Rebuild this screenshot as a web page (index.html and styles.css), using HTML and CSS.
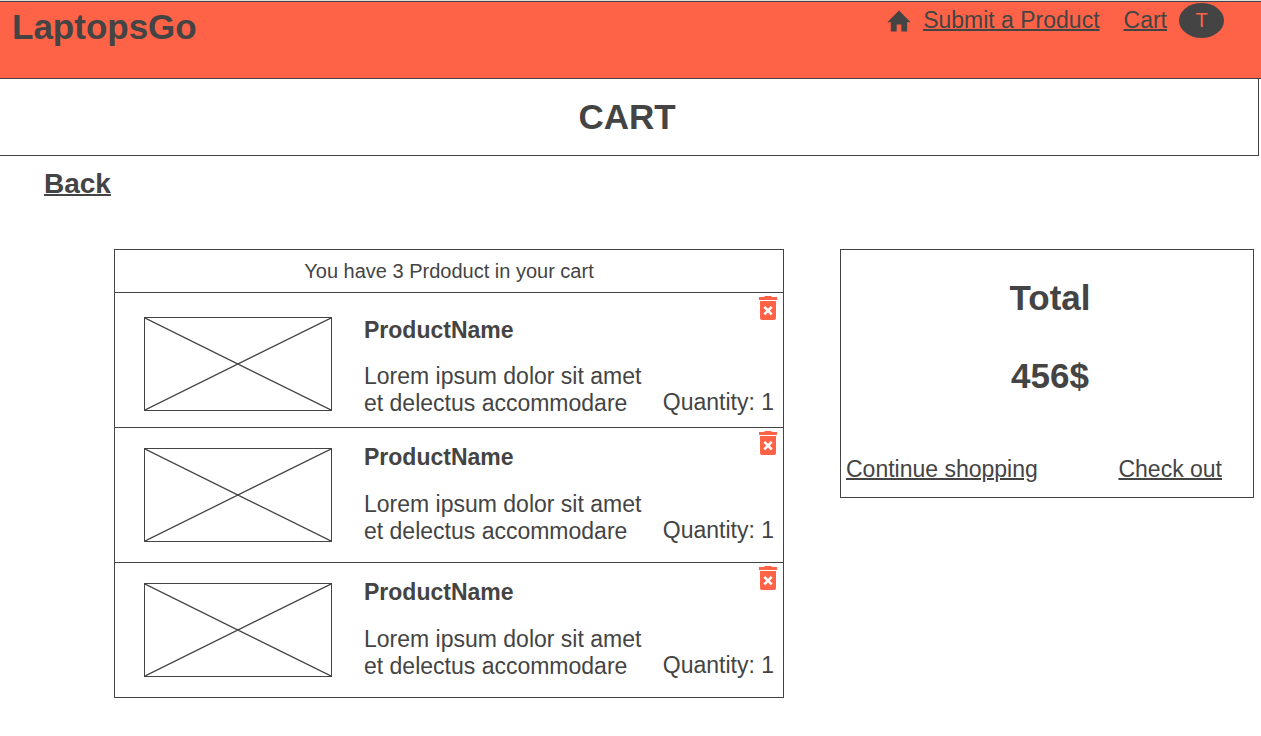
FILE: index.html
```html
<!DOCTYPE html>
<html lang="en">
<head>
  <meta charset="utf-8">
  <meta name="viewport" content="width=device-width, initial-scale=1">
  <title>LaptopsGo - Cart</title>
  <link rel="stylesheet" href="styles.css">
</head>
<body>
  <svg class="sprite" aria-hidden="true">
    <symbol id="icon-trash" viewBox="0 0 18 24">
      <path fill="currentColor" d="M5 1 6 0h6l1 1h5v3H0V1zM1 5h16v17a2 2 0 0 1-2 2H3a2 2 0 0 1-2-2z"/>
      <path fill="none" stroke="#fff" stroke-width="2.600" d="M5.300 10.900l7.400 7.400M12.700 10.900l-7.400 7.400"/>
    </symbol>
    <symbol id="placeholder" viewBox="0 0 186 92" preserveAspectRatio="none">
      <path fill="none" stroke="currentColor" stroke-width="1.300" d="M0 0l186 92M186 0L0 92"/>
    </symbol>
  </svg>

  <header class="site-header">
    <a class="brand" href="#">LaptopsGo</a>
    <nav class="nav">
      <a class="nav-home" href="#" aria-label="Home">
        <svg class="home-icon" viewBox="0 0 24 24" aria-hidden="true"><path fill="currentColor" d="M10 21v-6h4v6h5v-8h3L12 3 2 13h3v8z"/></svg>
      </a>
      <a class="link nav-submit" href="#">Submit a Product</a>
      <a class="link nav-cart" href="#">Cart</a>
      <button class="avatar" type="button">T</button>
    </nav>
  </header>

  <div class="page-title"><h1 class="heading">CART</h1></div>
  <a class="link back" href="#">Back</a>

  <main class="cart">
    <section class="products">
      <p class="products-count">You have 3 Prdoduct in your cart</p>
      <article class="item item-first">
        <svg class="item-image" aria-hidden="true"><use href="#placeholder"/></svg>
        <div class="item-body">
          <h2 class="item-name">ProductName</h2>
          <p class="item-text">Lorem ipsum dolor sit amet<br>et delectus accommodare</p>
        </div>
        <div class="item-side">
          <button class="remove" type="button" aria-label="Remove product"><svg class="trash-icon" aria-hidden="true"><use href="#icon-trash"/></svg></button>
          <p class="quantity">Quantity: 1</p>
        </div>
      </article>
      <article class="item">
        <svg class="item-image" aria-hidden="true"><use href="#placeholder"/></svg>
        <div class="item-body">
          <h2 class="item-name">ProductName</h2>
          <p class="item-text">Lorem ipsum dolor sit amet<br>et delectus accommodare</p>
        </div>
        <div class="item-side">
          <button class="remove" type="button" aria-label="Remove product"><svg class="trash-icon" aria-hidden="true"><use href="#icon-trash"/></svg></button>
          <p class="quantity">Quantity: 1</p>
        </div>
      </article>
      <article class="item">
        <svg class="item-image" aria-hidden="true"><use href="#placeholder"/></svg>
        <div class="item-body">
          <h2 class="item-name">ProductName</h2>
          <p class="item-text">Lorem ipsum dolor sit amet<br>et delectus accommodare</p>
        </div>
        <div class="item-side">
          <button class="remove" type="button" aria-label="Remove product"><svg class="trash-icon" aria-hidden="true"><use href="#icon-trash"/></svg></button>
          <p class="quantity">Quantity: 1</p>
        </div>
      </article>
    </section>

    <aside class="summary">
      <h2 class="heading">Total</h2>
      <p class="heading">456$</p>
      <div class="summary-links">
        <a class="link" href="#">Continue shopping</a>
        <a class="link" href="#">Check out</a>
      </div>
    </aside>
  </main>
</body>
</html>
```
FILE: styles.css
```css
:root {
  --ink: #444;
  --accent: #ff6347;
}

* {
  box-sizing: border-box;
}

body,
h1,
h2,
p {
  margin: 0;
}

body {
  background: #fff;
  color: var(--ink);
  font: 23px/27px "Liberation Sans", Arial, sans-serif;
  border-top: 1px solid #ddd;
}

button {
  padding: 0;
  border: 0;
  font: inherit;
  cursor: pointer;
}

.sprite {
  display: none;
}

.link {
  color: inherit;
  text-decoration: underline;
  text-decoration-thickness: 2px;
}

.heading,
.brand {
  font-size: 35px;
  line-height: 40px;
  font-weight: bold;
}

.site-header {
  display: flex;
  justify-content: space-between;
  align-items: flex-start;
  min-height: 78px;
  padding: 1px 37px 0 12px;
  background: var(--accent);
  border-top: 1px solid var(--ink);
  border-bottom: 1px solid var(--ink);
}

.brand {
  padding-top: 4px;
  color: inherit;
  text-decoration: none;
}

.nav {
  display: flex;
  align-items: center;
}

.nav-home {
  display: flex;
  margin-right: 10px;
  color: inherit;
}

.home-icon {
  width: 28px;
  height: 28px;
}

.nav-submit {
  margin-right: 24px;
}

.nav-cart {
  margin-right: 12px;
}

.avatar {
  width: 45px;
  height: 35px;
  border-radius: 50%;
  background: var(--ink);
  color: var(--accent);
  font-size: 20px;
}

.page-title {
  display: flex;
  justify-content: center;
  align-items: center;
  min-height: 77px;
  margin-right: 2px;
  padding-right: 4px;
  border-right: 1px solid var(--ink);
  border-bottom: 1px solid var(--ink);
}

.back {
  display: inline-block;
  margin: 12px 44px 0;
  font-size: 28px;
  line-height: 32px;
  font-weight: bold;
}

.cart {
  display: grid;
  grid-template-columns: 670fr 414fr;
  gap: 56px;
  align-items: start;
  margin: 49px 7px 0 114px;
}

.products,
.summary {
  border: 1px solid var(--ink);
}

.products-count {
  padding: 8px 0;
  font-size: 20px;
  line-height: 26px;
  text-align: center;
}

.item {
  display: flex;
  min-height: 135px;
  padding: 0 5px 0 29px;
  border-top: 1px solid var(--ink);
}

.item-image {
  flex: none;
  width: 188px;
  height: 94px;
  margin: 20px 32px 0 0;
  border: 1px solid var(--ink);
}

.item-body {
  flex: 1;
  padding-top: 16px;
}

.item-name {
  margin-bottom: 20px;
  font-size: 23px;
  line-height: 27px;
}

.item-side {
  display: flex;
  flex-direction: column;
  justify-content: space-between;
  align-items: flex-end;
  padding: 3px 0 18px;
}

.item-first .item-image {
  margin-top: 24px;
}

.item-first .item-body {
  padding-top: 24px;
}

.item-first .item-name {
  margin-bottom: 19px;
}

.item-first .item-side {
  padding-bottom: 11px;
}

.remove {
  display: flex;
  background: none;
  color: var(--accent);
}

.trash-icon {
  width: 20px;
  height: 24px;
}

.quantity {
  margin-right: 4px;
}

.summary {
  padding: 28px 31px 14px 5px;
}

.summary .heading {
  padding-left: 32px;
  margin-bottom: 38px;
  text-align: center;
}

.summary-links {
  display: flex;
  justify-content: space-between;
  margin-top: 60px;
}
```
